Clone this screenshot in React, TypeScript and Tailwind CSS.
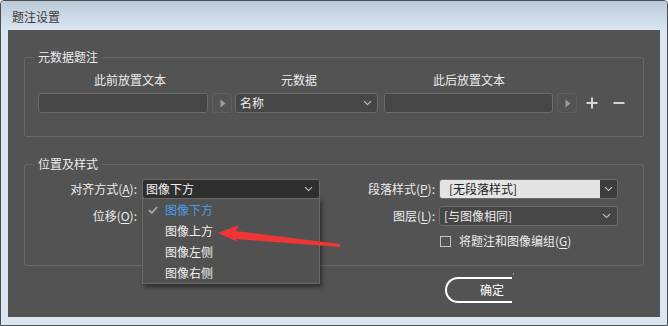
import React from "react";

const Chevron = ({ color = "#c8c8c8" }: { color?: string }) => (
  <svg width="9" height="6" viewBox="0 0 9 6" className="shrink-0">
    <path d="M1 1.2 L4.5 4.6 L8 1.2" fill="none" stroke={color} strokeWidth="1.1" />
  </svg>
);

const Tri = () => (
  <svg width="6" height="9" viewBox="0 0 6 9">
    <path d="M0.5 0.5 L5.5 4.5 L0.5 8.5 Z" fill="#9c9c9c" />
  </svg>
);

const ArrowBtn = () => (
  <div className="w-[20px] h-[20px] rounded-[3px] border border-[#5f5f5f] flex items-center justify-center pl-[1px]">
    <Tri />
  </div>
);

export default function App() {
  return (
    <div className="relative w-[668px] h-[326px] flex flex-col border border-[#4c4c4c] rounded-t-[4px] bg-[#d9e5f1] overflow-hidden font-['Noto_Sans_CJK_SC',sans-serif] text-[12px] leading-[16px]">
      {/* title bar */}
      <div className="h-[29px] shrink-0 bg-gradient-to-b from-[#bccbd9] to-[#d9e5f1] flex items-center pl-[11px] pt-[3px] text-[#3a3a3a]">
        题注设置
      </div>

      {/* content */}
      <div className="mx-[7px] h-[287px] shrink-0 bg-[#535353] px-[16px] pt-[19px] text-[#ececec] flex flex-col">
        {/* group 1 */}
        <fieldset className="border border-[#696969] rounded-[3px] pl-[9px] pb-[23px]">
          <legend className="px-[4px] leading-[16px]">元数据题注</legend>
          <div className="pl-[4px] flex flex-col">
            <div className="flex h-[16px] mt-[7px]">
              <div className="w-[184px] text-center">此前放置文本</div>
              <div className="w-[154px] text-center">元数据</div>
              <div className="w-[186px] text-center">此后放置文本</div>
            </div>
            <div className="flex items-center mt-[5px] h-[20px]">
              <div className="w-[170px] h-[20px] rounded-[3px] border border-[#6b6b6b] bg-[#464646]" />
              <div className="ml-[4px]">
                <ArrowBtn />
              </div>
              <div className="ml-[3px] w-[143px] h-[20px] rounded-[3px] border border-[#6b6b6b] bg-[#464646] flex items-center justify-between pl-[4px] pr-[5px]">
                <span>名称</span>
                <Chevron />
              </div>
              <div className="ml-[6px] w-[169px] h-[20px] rounded-[3px] border border-[#6b6b6b] bg-[#464646]" />
              <div className="ml-[4px]">
                <ArrowBtn />
              </div>
              <svg width="12" height="12" viewBox="0 0 12 12" className="ml-[9px]">
                <path d="M6 0.5 V11.5 M0.5 6 H11.5" stroke="#d4d4d4" strokeWidth="2" />
              </svg>
              <svg width="12" height="12" viewBox="0 0 12 12" className="ml-[15px]">
                <path d="M0.5 6 H11.5" stroke="#d4d4d4" strokeWidth="2" />
              </svg>
            </div>
          </div>
        </fieldset>

        {/* group 2 */}
        <fieldset className="mt-[19px] border border-[#696969] rounded-[3px] pl-[9px] pb-[16px]">
          <legend className="px-[4px] leading-[16px]">位置及样式</legend>
          <div className="flex items-center mt-[7px] h-[20px]">
            <div className="w-[103px] text-right">
              对齐方式(<u className="underline-offset-2">A</u>):
            </div>
            <div className="relative ml-[5px] w-[178px] h-[20px]">
              <div className="w-full h-full rounded-[3px] border border-[#6b6b6b] bg-[#2f2f2f] flex items-center justify-between pl-[3px] pr-[6px] text-[#f0f0f0]">
                <span>图像下方</span>
                <Chevron />
              </div>
              {/* open menu */}
              <div className="absolute left-0 top-[19px] z-10 w-[178px] border border-[#6a6a6a] bg-[#515151] shadow-[2px_3px_4px_rgba(0,0,0,0.45)] flex flex-col">
                <div className="h-[21px] flex items-center">
                  <svg width="10" height="8" viewBox="0 0 10 8" className="ml-[5px]">
                    <path d="M1 4.2 L3.8 7 L9 1" fill="none" stroke="#a8a8a8" strokeWidth="1.8" />
                  </svg>
                  <span className="ml-[7px] text-[#4b9be6]">图像下方</span>
                </div>
                <div className="h-[21px] flex items-center pl-[22px] text-[#f0f0f0]">图像上方</div>
                <div className="h-[21px] flex items-center pl-[22px] text-[#f0f0f0]">图像左侧</div>
                <div className="h-[21px] flex items-center pl-[22px] text-[#f0f0f0]">图像右侧</div>
              </div>
            </div>
            <div className="w-[115px] text-right">
              段落样式(<u className="underline-offset-2">P</u>):
            </div>
            <div className="ml-[4px] w-[179px] h-[20px] rounded-[3px] border border-[#6b6b6b] flex overflow-hidden">
              <div className="flex-1 bg-[#e4e4e4] text-[#222] flex items-center pl-[9px]">[无段落样式]</div>
              <div className="w-[17px] bg-[#3c3c3c] flex items-center justify-center">
                <Chevron />
              </div>
            </div>
          </div>
          <div className="flex items-center mt-[7px] h-[20px]">
            <div className="w-[103px] text-right">
              位移(<u className="underline-offset-2">O</u>):
            </div>
            <div className="ml-[5px] w-[178px]" />
            <div className="w-[115px] text-right">
              图层(<u className="underline-offset-2">L</u>):
            </div>
            <div className="ml-[4px] w-[179px] h-[20px] rounded-[3px] border border-[#6b6b6b] bg-[#464646] flex items-center justify-between pl-[4px] pr-[6px]">
              <span>[与图像相同]</span>
              <Chevron />
            </div>
          </div>
          <div className="flex items-center mt-[7px] h-[16px]">
            <div className="ml-[406px] w-[11px] h-[11px] border border-[#c4c4c4]" />
            <span className="ml-[8px]">
              将题注和图像编组(<u className="underline-offset-2">G</u>)
            </span>
          </div>
        </fieldset>

        {/* button */}
        <div className="relative mt-[11px] ml-[421px] w-[67px] h-[26px] rounded-l-[13px] border-2 border-r-0 border-white flex items-center pl-[33px] text-white">
          确定
          <div className="absolute right-[-2px] top-[-6px] w-[1px] h-[2px] bg-[#9a9a9a]" />
        </div>
      </div>

      <div className="flex-1" />

      {/* red arrow overlay */}
      <svg className="absolute left-0 top-0 z-20 pointer-events-none" width="668" height="326" viewBox="0 0 668 326">
        <polygon
          points="217,232 238,224 235,230 339,243 339,246 234,238 237,241"
          fill="#ef3535"
        />
      </svg>
    </div>
  );
}
